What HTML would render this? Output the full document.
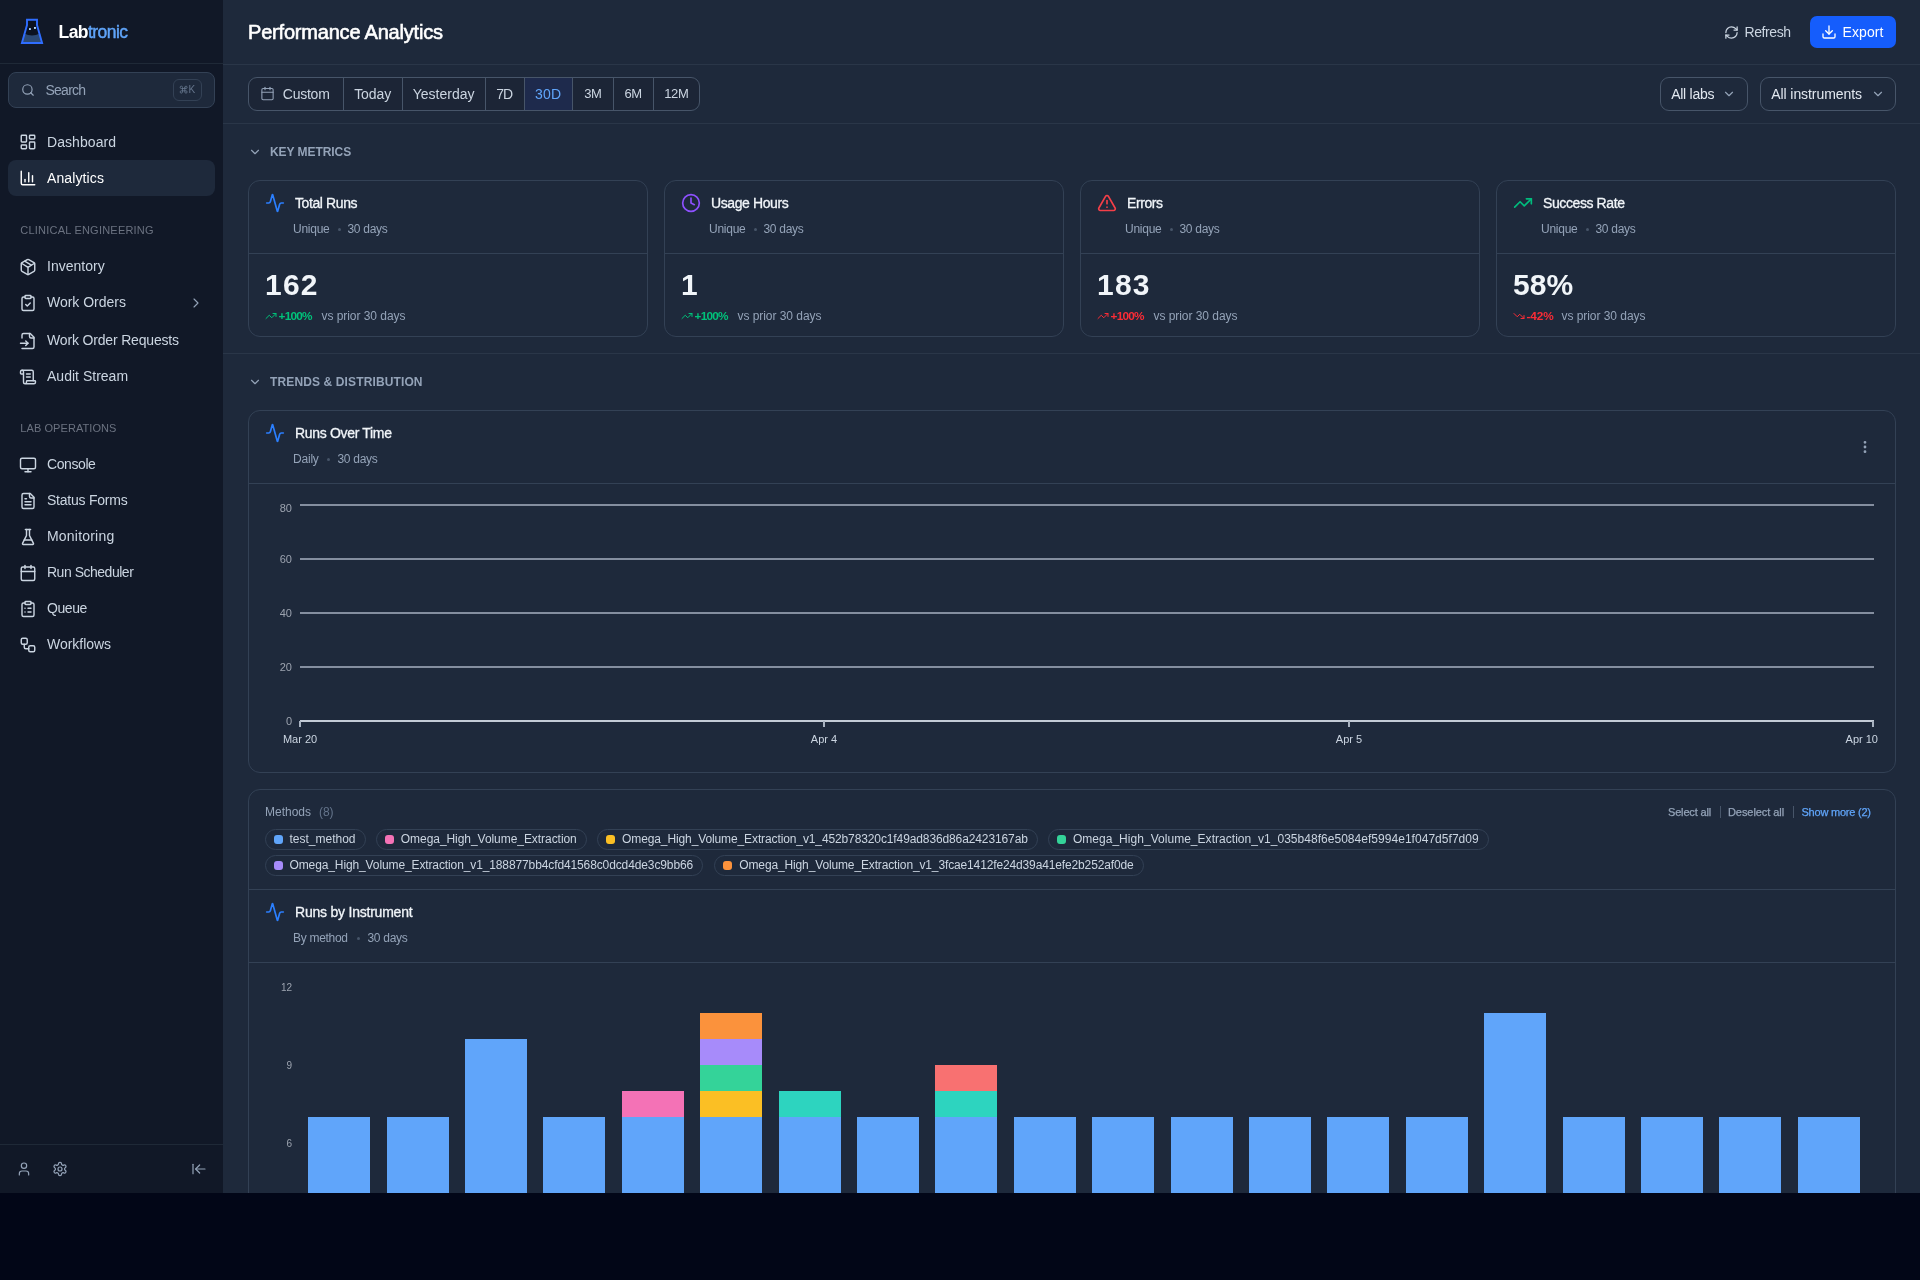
<!DOCTYPE html>
<html><head><meta charset="utf-8">
<style>
*{box-sizing:border-box;margin:0;padding:0}
html,body{width:1920px;height:1280px;overflow:hidden;background:#020617;font-family:"Liberation Sans",sans-serif;-webkit-font-smoothing:antialiased}
.abs{position:absolute}
svg{display:block}
#sb{position:absolute;left:0;top:0;width:223px;height:1193px;background:#111827;overflow:hidden}
#main{position:absolute;left:223px;top:0;width:1697px;height:1193px;background:#1e293b;overflow:hidden}
#mi{position:absolute;left:-223px;top:0;width:1920px;height:1280px;will-change:transform}
#sbi{position:absolute;left:0;top:0;width:223px;height:1193px;will-change:transform}
.t{position:absolute;white-space:nowrap;line-height:1}
.ic{position:absolute;fill:none;stroke:currentColor;stroke-width:2;stroke-linecap:round;stroke-linejoin:round}
</style></head><body>

<div id="sb"><div id="sbi">
<svg class="abs" style="left:14px;top:12px" width="40" height="40" viewBox="0 0 40 40">
<path d="M13 7.7 H23 V13 L28.1 31 H7.9 L13 13 Z" fill="#0b1220"/>
<path d="M10.1 21.5 Q18 25.5 25.9 21.5 L28.1 31 H7.9 Z" fill="#2c4a74"/>
<path d="M13 7.7 H23 V13 L28.1 31 H7.9 L13 13 Z" fill="none" stroke="#2f6dff" stroke-width="1.9" stroke-linejoin="miter"/>
<rect x="15" y="16.1" width="1.9" height="1.9" fill="#a5cdfd"/><rect x="20" y="15" width="1.9" height="1.9" fill="#b7dcff"/>
</svg>
<div class="t" style="left:58.5px;top:21.94px;height:20.12px;line-height:20.12px;font-size:17.5px;color:#ffffff;font-weight:bold;letter-spacing:-0.552734375px">Lab<span style="color:#60a5fa;font-weight:normal;-webkit-text-stroke:0.45px #60a5fa">tronic</span></div>
<div class="abs" style="left:0px;top:63px;width:223px;height:1px;background:#1f2937"></div>
<div class="abs" style="left:8px;top:72px;width:207px;height:36px;border:1px solid #334155;border-radius:8px;background:#1e293b"></div>
<svg class="ic" style="left:20.7px;top:83.2px;color:#94a3b8;stroke-width:2" width="14" height="14" viewBox="0 0 24 24"><circle cx="11" cy="11" r="8"/><path d="m21 21-4.3-4.3"/></svg>
<div class="t" style="left:45.5px;top:82.45px;height:16.10px;line-height:16.10px;font-size:14px;color:#94a3b8;font-weight:normal;letter-spacing:-0.7518749999999997px">Search</div>
<div class="abs" style="left:173px;top:79px;width:29px;height:22px;border:1px solid #334155;border-radius:6px"></div>
<svg class="ic" style="left:178.8px;top:85px;color:#64748b;stroke-width:2.2" width="9.3" height="9.3" viewBox="0 0 24 24"><path d="M15 6v12a3 3 0 1 0 3-3H6a3 3 0 1 0 3 3V6a3 3 0 1 0-3 3h12a3 3 0 1 0-3-3"/></svg>
<div class="t" style="left:188.6px;top:84.45px;height:11.50px;line-height:11.50px;font-size:10px;color:#64748b;font-weight:normal;letter-spacing:0px">K</div>
<div class="abs" style="left:8px;top:160px;width:207px;height:36px;background:#1e293b;border-radius:8px"></div>
<svg class="ic" style="left:19.4px;top:133.4px;color:#cbd5e1;stroke-width:1.9" width="18" height="18" viewBox="0 0 24 24"><rect width="7" height="9" x="3" y="3" rx="1"/><rect width="7" height="5" x="14" y="3" rx="1"/><rect width="7" height="9" x="14" y="12" rx="1"/><rect width="7" height="5" x="3" y="16" rx="1"/></svg>
<div class="t" style="left:47px;top:133.95px;height:16.10px;line-height:16.10px;font-size:14px;color:#cbd5e1;font-weight:normal;letter-spacing:0.07500000000000107px">Dashboard</div>
<svg class="ic" style="left:19.4px;top:169.4px;color:#ffffff;stroke-width:1.9" width="18" height="18" viewBox="0 0 24 24"><path d="M3 3v16a2 2 0 0 0 2 2h16"/><path d="M18 17V9"/><path d="M13 17V5"/><path d="M8 17v-3"/></svg>
<div class="t" style="left:47px;top:169.95px;height:16.10px;line-height:16.10px;font-size:14px;color:#ffffff;font-weight:normal;letter-spacing:0.10859375000000071px">Analytics</div>
<svg class="ic" style="left:19.4px;top:257.9px;color:#cbd5e1;stroke-width:1.9" width="18" height="18" viewBox="0 0 24 24"><path d="M11 21.73a2 2 0 0 0 2 0l7-4A2 2 0 0 0 21 16V8a2 2 0 0 0-1-1.73l-7-4a2 2 0 0 0-2 0l-7 4A2 2 0 0 0 3 8v8a2 2 0 0 0 1 1.73z"/><path d="M12 22V12"/><path d="m3.3 7 7.703 4.734a2 2 0 0 0 1.994 0L20.7 7"/><path d="m7.5 4.27 9 5.15"/></svg>
<div class="t" style="left:47px;top:258.45px;height:16.10px;line-height:16.10px;font-size:14px;color:#cbd5e1;font-weight:normal;letter-spacing:0.013281250000000355px">Inventory</div>
<svg class="ic" style="left:19.4px;top:293.9px;color:#cbd5e1;stroke-width:1.9" width="18" height="18" viewBox="0 0 24 24"><rect width="8" height="4" x="8" y="2" rx="1" ry="1"/><path d="M16 4h2a2 2 0 0 1 2 2v14a2 2 0 0 1-2 2H6a2 2 0 0 1-2-2V6a2 2 0 0 1 2-2h2"/><path d="m9 14 2 2 4-4"/></svg>
<div class="t" style="left:47px;top:294.45px;height:16.10px;line-height:16.10px;font-size:14px;color:#cbd5e1;font-weight:normal;letter-spacing:-0.014374999999999716px">Work Orders</div>
<svg class="ic" style="left:19.4px;top:331.9px;color:#cbd5e1;stroke-width:1.9" width="18" height="18" viewBox="0 0 24 24"><path d="M4 22h14a2 2 0 0 0 2-2V7l-5-5H6a2 2 0 0 0-2 2v4"/><path d="M14 2v4a2 2 0 0 0 2 2h4"/><path d="M2 15h10"/><path d="m9 18 3-3-3-3"/></svg>
<div class="t" style="left:47px;top:332.45px;height:16.10px;line-height:16.10px;font-size:14px;color:#cbd5e1;font-weight:normal;letter-spacing:-0.1680555555555543px">Work Order Requests</div>
<svg class="ic" style="left:19.4px;top:367.9px;color:#cbd5e1;stroke-width:1.9" width="18" height="18" viewBox="0 0 24 24"><path d="M15 12h-5"/><path d="M15 8h-5"/><path d="M19 17V5a2 2 0 0 0-2-2H4"/><path d="M8 21h12a2 2 0 0 0 2-2v-1a1 1 0 0 0-1-1H11a1 1 0 0 0-1 1v1a2 2 0 1 1-4 0V5a2 2 0 1 0-4 0v2a1 1 0 0 0 1 1h3"/></svg>
<div class="t" style="left:47px;top:368.45px;height:16.10px;line-height:16.10px;font-size:14px;color:#cbd5e1;font-weight:normal;letter-spacing:0.014772727272728048px">Audit Stream</div>
<svg class="ic" style="left:19.4px;top:455.9px;color:#cbd5e1;stroke-width:1.9" width="18" height="18" viewBox="0 0 24 24"><rect width="20" height="14" x="2" y="3" rx="2"/><line x1="8" x2="16" y1="21" y2="21"/><line x1="12" x2="12" y1="17" y2="21"/></svg>
<div class="t" style="left:47px;top:456.45px;height:16.10px;line-height:16.10px;font-size:14px;color:#cbd5e1;font-weight:normal;letter-spacing:-0.41249999999999903px">Console</div>
<svg class="ic" style="left:19.4px;top:491.9px;color:#cbd5e1;stroke-width:1.9" width="18" height="18" viewBox="0 0 24 24"><path d="M15 2H6a2 2 0 0 0-2 2v16a2 2 0 0 0 2 2h12a2 2 0 0 0 2-2V7Z"/><path d="M14 2v4a2 2 0 0 0 2 2h4"/><path d="M10 9H8"/><path d="M16 13H8"/><path d="M16 17H8"/></svg>
<div class="t" style="left:47px;top:492.45px;height:16.10px;line-height:16.10px;font-size:14px;color:#cbd5e1;font-weight:normal;letter-spacing:-0.23181818181818156px">Status Forms</div>
<svg class="ic" style="left:19.4px;top:527.9px;color:#cbd5e1;stroke-width:1.9" width="18" height="18" viewBox="0 0 24 24"><path d="M10 2v7.527a2 2 0 0 1-.211.896L4.72 20.55a1 1 0 0 0 .9 1.45h12.76a1 1 0 0 0 .9-1.45l-5.069-10.127A2 2 0 0 1 14 9.527V2"/><path d="M8.5 2h7"/><path d="M7 16h10"/></svg>
<div class="t" style="left:47px;top:528.45px;height:16.10px;line-height:16.10px;font-size:14px;color:#cbd5e1;font-weight:normal;letter-spacing:0.20277777777777808px">Monitoring</div>
<svg class="ic" style="left:19.4px;top:563.9px;color:#cbd5e1;stroke-width:1.9" width="18" height="18" viewBox="0 0 24 24"><path d="M8 2v4"/><path d="M16 2v4"/><rect width="18" height="18" x="3" y="4" rx="2"/><path d="M3 10h18"/></svg>
<div class="t" style="left:47px;top:564.45px;height:16.10px;line-height:16.10px;font-size:14px;color:#cbd5e1;font-weight:normal;letter-spacing:-0.4854166666666669px">Run Scheduler</div>
<svg class="ic" style="left:19.4px;top:599.9px;color:#cbd5e1;stroke-width:1.9" width="18" height="18" viewBox="0 0 24 24"><rect width="8" height="4" x="8" y="2" rx="1" ry="1"/><path d="M16 4h2a2 2 0 0 1 2 2v14a2 2 0 0 1-2 2H6a2 2 0 0 1-2-2V6a2 2 0 0 1 2-2h2"/><path d="M12 11h4"/><path d="M12 16h4"/><path d="M8 11h.01"/><path d="M8 16h.01"/></svg>
<div class="t" style="left:47px;top:600.45px;height:16.10px;line-height:16.10px;font-size:14px;color:#cbd5e1;font-weight:normal;letter-spacing:-0.4117187499999986px">Queue</div>
<svg class="ic" style="left:19.4px;top:635.9px;color:#cbd5e1;stroke-width:1.9" width="18" height="18" viewBox="0 0 24 24"><rect width="8" height="8" x="3" y="3" rx="2"/><path d="M7 11v4a2 2 0 0 0 2 2h4"/><rect width="8" height="8" x="13" y="13" rx="2"/></svg>
<div class="t" style="left:47px;top:636.45px;height:16.10px;line-height:16.10px;font-size:14px;color:#cbd5e1;font-weight:normal;letter-spacing:-0.026562499999998934px">Workflows</div>
<svg class="ic" style="left:188px;top:294.5px;color:#94a3b8;stroke-width:1.7" width="16" height="16" viewBox="0 0 24 24"><path d="m9 18 6-6-6-6"/></svg>
<div class="t" style="left:20.3px;top:223.68px;height:12.65px;line-height:12.65px;font-size:11px;color:#6b7280;font-weight:normal;letter-spacing:0.21644736842105322px">CLINICAL ENGINEERING</div>
<div class="t" style="left:20.3px;top:421.68px;height:12.65px;line-height:12.65px;font-size:11px;color:#6b7280;font-weight:normal;letter-spacing:0.07259615384615341px">LAB OPERATIONS</div>
<div class="abs" style="left:0px;top:1144px;width:223px;height:1px;background:#1f2937"></div>
<svg class="ic" style="left:16.1px;top:1161px;color:#94a3b8;stroke-width:1.8" width="16" height="16" viewBox="0 0 24 24"><path d="M19 21v-2a4 4 0 0 0-4-4H9a4 4 0 0 0-4 4v2"/><circle cx="12" cy="7" r="4"/></svg>
<svg class="ic" style="left:52px;top:1161px;color:#94a3b8;stroke-width:1.8" width="16" height="16" viewBox="0 0 24 24"><path d="M12.22 2h-.44a2 2 0 0 0-2 2v.18a2 2 0 0 1-1 1.73l-.43.25a2 2 0 0 1-2 0l-.15-.08a2 2 0 0 0-2.73.73l-.22.38a2 2 0 0 0 .73 2.730l.15.1a2 2 0 0 1 1 1.72v.51a2 2 0 0 1-1 1.74l-.15.09a2 2 0 0 0-.73 2.73l.22.38a2 2 0 0 0 2.73.73l.15-.08a2 2 0 0 1 2 0l.43.25a2 2 0 0 1 1 1.73V20a2 2 0 0 0 2 2h.44a2 2 0 0 0 2-2v-.18a2 2 0 0 1 1-1.73l.43-.25a2 2 0 0 1 2 0l.15.08a2 2 0 0 0 2.73-.73l.22-.39a2 2 0 0 0-.73-2.73l-.15-.08a2 2 0 0 1-1-1.74v-.5a2 2 0 0 1 1-1.74l.15-.09a2 2 0 0 0 .73-2.73l-.22-.38a2 2 0 0 0-2.73-.73l-.15.08a2 2 0 0 1-2 0l-.43-.25a2 2 0 0 1-1-1.73V4a2 2 0 0 0-2-2z"/><circle cx="12" cy="12" r="3"/></svg>
<svg class="ic" style="left:190.75px;top:1161px;color:#94a3b8;stroke-width:1.8" width="16" height="16" viewBox="0 0 24 24"><path d="M3 19V5"/><path d="m13 6-6 6 6 6"/><path d="M7 12h14"/></svg>
</div></div>
<div id="main"><div id="mi">
<div class="t" style="left:248px;top:20.50px;height:23.00px;line-height:23.00px;font-size:20px;color:#ffffff;font-weight:normal;letter-spacing:-0.19921875px;-webkit-text-stroke:0.6px #ffffff">Performance Analytics</div>
<div class="abs" style="left:223px;top:64px;width:1697px;height:1px;background:#2a3648"></div>
<svg class="ic" style="left:1723.5px;top:24.5px;color:#cbd5e1;stroke-width:2" width="15" height="15" viewBox="0 0 24 24"><path d="M3 12a9 9 0 0 1 9-9 9.75 9.75 0 0 1 6.74 2.74L21 8"/><path d="M21 3v5h-5"/><path d="M21 12a9 9 0 0 1-9 9 9.75 9.75 0 0 1-6.74-2.74L3 16"/><path d="M8 16H3v5"/></svg>
<div class="t" style="left:1744.5px;top:23.95px;height:16.10px;line-height:16.10px;font-size:14px;color:#cbd5e1;font-weight:normal;letter-spacing:-0.4052083333333331px">Refresh</div>
<div class="abs" style="left:1810px;top:16px;width:86px;height:32px;background:#155dfc;border-radius:7px"></div>
<svg class="ic" style="left:1821px;top:24px;color:#ffffff;stroke-width:2" width="16" height="16" viewBox="0 0 24 24"><path d="M21 15v4a2 2 0 0 1-2 2H5a2 2 0 0 1-2-2v-4"/><polyline points="7 10 12 15 17 10"/><line x1="12" x2="12" y1="15" y2="3"/></svg>
<div class="t" style="left:1842.5px;top:23.95px;height:16.10px;line-height:16.10px;font-size:14px;color:#ffffff;font-weight:normal;letter-spacing:0.10625px">Export</div>
<div class="abs" style="left:223px;top:123px;width:1697px;height:1px;background:#2a3648"></div>
<div class="abs" style="left:248px;top:77px;width:452px;height:34px;border:1px solid #475569;border-radius:9px;background:#1c2536;overflow:hidden"></div>
<svg class="ic" style="left:260px;top:86px;color:#94a3b8;stroke-width:1.7" width="15" height="15" viewBox="0 0 24 24"><path d="M8 2v4"/><path d="M16 2v4"/><rect width="18" height="18" x="3" y="4" rx="2"/><path d="M3 10h18"/></svg>
<div class="t" style="left:282.8px;top:85.95px;height:16.10px;line-height:16.10px;font-size:14px;color:#cbd5e1;font-weight:normal;letter-spacing:-0.246875px">Custom</div>
<div class="abs" style="left:343px;top:78px;width:1px;height:32px;background:#475569"></div>
<div class="t" style="left:354.2px;top:85.95px;height:16.10px;line-height:16.10px;font-size:14px;color:#cbd5e1;font-weight:normal;letter-spacing:-0.08984375px">Today</div>
<div class="abs" style="left:402px;top:78px;width:1px;height:32px;background:#475569"></div>
<div class="t" style="left:412.8px;top:85.95px;height:16.10px;line-height:16.10px;font-size:14px;color:#cbd5e1;font-weight:normal;letter-spacing:-0.006250000000001421px">Yesterday</div>
<div class="abs" style="left:485px;top:78px;width:1px;height:32px;background:#475569"></div>
<div class="t" style="left:496.2px;top:85.95px;height:16.10px;line-height:16.10px;font-size:14px;color:#cbd5e1;font-weight:normal;letter-spacing:-0.9062499999999432px">7D</div>
<div class="abs" style="left:525px;top:78px;width:47px;height:32px;background:#1e2a4c"></div>
<div class="abs" style="left:524px;top:78px;width:1px;height:32px;background:#475569"></div>
<div class="t" style="left:535.0px;top:85.95px;height:16.10px;line-height:16.10px;font-size:14px;color:#60a5fa;font-weight:normal;letter-spacing:0.15625px">30D</div>
<div class="abs" style="left:572px;top:78px;width:1px;height:32px;background:#475569"></div>
<div class="t" style="left:392.79999999999995px;width:400px;text-align:center;top:86.53px;height:14.95px;line-height:14.95px;font-size:13px;color:#cbd5e1;font-weight:normal;letter-spacing:-0.4px">3M</div>
<div class="abs" style="left:613px;top:78px;width:1px;height:32px;background:#475569"></div>
<div class="t" style="left:433.07500000000005px;width:400px;text-align:center;top:86.53px;height:14.95px;line-height:14.95px;font-size:13px;color:#cbd5e1;font-weight:normal;letter-spacing:-0.4px">6M</div>
<div class="abs" style="left:653px;top:78px;width:1px;height:32px;background:#475569"></div>
<div class="t" style="left:476.29999999999995px;width:400px;text-align:center;top:86.53px;height:14.95px;line-height:14.95px;font-size:13px;color:#cbd5e1;font-weight:normal;letter-spacing:-0.4px">12M</div>
<div class="abs" style="left:1660px;top:77px;width:88px;height:34px;border:1px solid #475569;border-radius:9px"></div>
<div class="t" style="left:1671.2px;top:85.95px;height:16.10px;line-height:16.10px;font-size:14px;color:#e2e8f0;font-weight:normal;letter-spacing:-0.26294642857142897px">All labs</div>
<svg class="ic" style="left:1722px;top:87px;color:#94a3b8;stroke-width:2" width="14" height="14" viewBox="0 0 24 24"><path d="m6 9 6 6 6-6"/></svg>
<div class="abs" style="left:1760px;top:77px;width:136px;height:34px;border:1px solid #475569;border-radius:9px"></div>
<div class="t" style="left:1771.2px;top:85.95px;height:16.10px;line-height:16.10px;font-size:14px;color:#e2e8f0;font-weight:normal;letter-spacing:-0.07232142857142877px">All instruments</div>
<svg class="ic" style="left:1871px;top:87px;color:#94a3b8;stroke-width:2" width="14" height="14" viewBox="0 0 24 24"><path d="m6 9 6 6 6-6"/></svg>
<svg class="ic" style="left:248px;top:145px;color:#94a3b8;stroke-width:2" width="14" height="14" viewBox="0 0 24 24"><path d="m6 9 6 6 6-6"/></svg>
<div class="t" style="left:270px;top:145.60px;height:13.80px;line-height:13.80px;font-size:12px;color:#94a3b8;font-weight:bold;letter-spacing:-0.05968749999999971px">KEY METRICS</div>
<div class="abs" style="left:248px;top:180px;width:400px;height:157px;border:1px solid #334155;border-radius:12px"></div>
<div class="abs" style="left:248px;top:253px;width:400px;height:1px;background:#334155"></div>
<svg class="ic" style="left:265px;top:193px;color:#2b7fff;stroke-width:2" width="20" height="20" viewBox="0 0 24 24"><path d="M22 12h-2.48a2 2 0 0 0-1.93 1.46l-2.35 8.36a.25.25 0 0 1-.48 0L9.24 2.18a.25.25 0 0 0-.48 0l-2.35 8.36A2 2 0 0 1 4.49 12H2"/></svg>
<div class="t" style="left:295px;top:195.45px;height:16.10px;line-height:16.10px;font-size:14px;color:#f1f5f9;font-weight:normal;letter-spacing:-0.4px;-webkit-text-stroke:0.3px #f1f5f9">Total Runs</div>
<div class="t" style="left:293px;top:222.60px;height:13.80px;line-height:13.80px;font-size:12px;color:#94a3b8;font-weight:normal;letter-spacing:-0.25px">Unique</div>
<div class="abs" style="left:337.5px;top:227.5px;width:3px;height:3px;background:#475569;border-radius:50%"></div>
<div class="t" style="left:347.5px;top:222.60px;height:13.80px;line-height:13.80px;font-size:12px;color:#94a3b8;font-weight:normal;letter-spacing:-0.3px">30 days</div>
<div class="t" style="left:265px;top:267.75px;height:34.50px;line-height:34.50px;font-size:30px;color:#f1f5f9;font-weight:bold;letter-spacing:1.2px">162</div>
<svg class="ic" style="left:265px;top:309.5px;color:#00c27a;stroke-width:2" width="12" height="12" viewBox="0 0 24 24"><polyline points="22 7 13.5 15.5 8.5 10.5 2 17"/><polyline points="16 7 22 7 22 13"/></svg>
<div class="t" style="left:278.5px;top:309.51px;height:13.57px;line-height:13.57px;font-size:11.8px;color:#00c27a;font-weight:bold;letter-spacing:-0.75px">+100%</div>
<div class="t" style="left:321.5px;top:309.80px;height:13.80px;line-height:13.80px;font-size:12px;color:#94a3b8;font-weight:normal;letter-spacing:-0.05px">vs prior 30 days</div>
<div class="abs" style="left:664px;top:180px;width:400px;height:157px;border:1px solid #334155;border-radius:12px"></div>
<div class="abs" style="left:664px;top:253px;width:400px;height:1px;background:#334155"></div>
<svg class="ic" style="left:681px;top:193px;color:#8e51ff;stroke-width:2" width="20" height="20" viewBox="0 0 24 24"><circle cx="12" cy="12" r="10"/><polyline points="12 6 12 12 16 14"/></svg>
<div class="t" style="left:711px;top:195.45px;height:16.10px;line-height:16.10px;font-size:14px;color:#f1f5f9;font-weight:normal;letter-spacing:-0.4px;-webkit-text-stroke:0.3px #f1f5f9">Usage Hours</div>
<div class="t" style="left:709px;top:222.60px;height:13.80px;line-height:13.80px;font-size:12px;color:#94a3b8;font-weight:normal;letter-spacing:-0.25px">Unique</div>
<div class="abs" style="left:753.5px;top:227.5px;width:3px;height:3px;background:#475569;border-radius:50%"></div>
<div class="t" style="left:763.5px;top:222.60px;height:13.80px;line-height:13.80px;font-size:12px;color:#94a3b8;font-weight:normal;letter-spacing:-0.3px">30 days</div>
<div class="t" style="left:681px;top:267.75px;height:34.50px;line-height:34.50px;font-size:30px;color:#f1f5f9;font-weight:bold;letter-spacing:1.2px">1</div>
<svg class="ic" style="left:681px;top:309.5px;color:#00c27a;stroke-width:2" width="12" height="12" viewBox="0 0 24 24"><polyline points="22 7 13.5 15.5 8.5 10.5 2 17"/><polyline points="16 7 22 7 22 13"/></svg>
<div class="t" style="left:694.5px;top:309.51px;height:13.57px;line-height:13.57px;font-size:11.8px;color:#00c27a;font-weight:bold;letter-spacing:-0.75px">+100%</div>
<div class="t" style="left:737.5px;top:309.80px;height:13.80px;line-height:13.80px;font-size:12px;color:#94a3b8;font-weight:normal;letter-spacing:-0.05px">vs prior 30 days</div>
<div class="abs" style="left:1080px;top:180px;width:400px;height:157px;border:1px solid #334155;border-radius:12px"></div>
<div class="abs" style="left:1080px;top:253px;width:400px;height:1px;background:#334155"></div>
<svg class="ic" style="left:1097px;top:193px;color:#f43f48;stroke-width:2" width="20" height="20" viewBox="0 0 24 24"><path d="m21.73 18-8-14a2 2 0 0 0-3.48 0l-8 14A2 2 0 0 0 4 21h16a2 2 0 0 0 1.73-3"/><path d="M12 9v4"/><path d="M12 17h.01"/></svg>
<div class="t" style="left:1127px;top:195.45px;height:16.10px;line-height:16.10px;font-size:14px;color:#f1f5f9;font-weight:normal;letter-spacing:-0.4px;-webkit-text-stroke:0.3px #f1f5f9">Errors</div>
<div class="t" style="left:1125px;top:222.60px;height:13.80px;line-height:13.80px;font-size:12px;color:#94a3b8;font-weight:normal;letter-spacing:-0.25px">Unique</div>
<div class="abs" style="left:1169.5px;top:227.5px;width:3px;height:3px;background:#475569;border-radius:50%"></div>
<div class="t" style="left:1179.5px;top:222.60px;height:13.80px;line-height:13.80px;font-size:12px;color:#94a3b8;font-weight:normal;letter-spacing:-0.3px">30 days</div>
<div class="t" style="left:1097px;top:267.75px;height:34.50px;line-height:34.50px;font-size:30px;color:#f1f5f9;font-weight:bold;letter-spacing:1.2px">183</div>
<svg class="ic" style="left:1097px;top:309.5px;color:#fb2c36;stroke-width:2" width="12" height="12" viewBox="0 0 24 24"><polyline points="22 7 13.5 15.5 8.5 10.5 2 17"/><polyline points="16 7 22 7 22 13"/></svg>
<div class="t" style="left:1110.5px;top:309.51px;height:13.57px;line-height:13.57px;font-size:11.8px;color:#fb2c36;font-weight:bold;letter-spacing:-0.75px">+100%</div>
<div class="t" style="left:1153.5px;top:309.80px;height:13.80px;line-height:13.80px;font-size:12px;color:#94a3b8;font-weight:normal;letter-spacing:-0.05px">vs prior 30 days</div>
<div class="abs" style="left:1496px;top:180px;width:400px;height:157px;border:1px solid #334155;border-radius:12px"></div>
<div class="abs" style="left:1496px;top:253px;width:400px;height:1px;background:#334155"></div>
<svg class="ic" style="left:1513px;top:193px;color:#00bc7d;stroke-width:2" width="20" height="20" viewBox="0 0 24 24"><polyline points="22 7 13.5 15.5 8.5 10.5 2 17"/><polyline points="16 7 22 7 22 13"/></svg>
<div class="t" style="left:1543px;top:195.45px;height:16.10px;line-height:16.10px;font-size:14px;color:#f1f5f9;font-weight:normal;letter-spacing:-0.4px;-webkit-text-stroke:0.3px #f1f5f9">Success Rate</div>
<div class="t" style="left:1541px;top:222.60px;height:13.80px;line-height:13.80px;font-size:12px;color:#94a3b8;font-weight:normal;letter-spacing:-0.25px">Unique</div>
<div class="abs" style="left:1585.5px;top:227.5px;width:3px;height:3px;background:#475569;border-radius:50%"></div>
<div class="t" style="left:1595.5px;top:222.60px;height:13.80px;line-height:13.80px;font-size:12px;color:#94a3b8;font-weight:normal;letter-spacing:-0.3px">30 days</div>
<div class="t" style="left:1513px;top:267.75px;height:34.50px;line-height:34.50px;font-size:30px;color:#f1f5f9;font-weight:bold;letter-spacing:0.1px">58%</div>
<svg class="ic" style="left:1513px;top:309.5px;color:#fb2c36;stroke-width:2" width="12" height="12" viewBox="0 0 24 24"><polyline points="22 17 13.5 8.5 8.5 13.5 2 7"/><polyline points="16 17 22 17 22 11"/></svg>
<div class="t" style="left:1526.5px;top:309.51px;height:13.57px;line-height:13.57px;font-size:11.8px;color:#fb2c36;font-weight:bold;letter-spacing:-0.1px">-42%</div>
<div class="t" style="left:1561.5px;top:309.80px;height:13.80px;line-height:13.80px;font-size:12px;color:#94a3b8;font-weight:normal;letter-spacing:-0.05px">vs prior 30 days</div>
<div class="abs" style="left:223px;top:353px;width:1697px;height:1px;background:#2a3648"></div>
<svg class="ic" style="left:248px;top:375px;color:#94a3b8;stroke-width:2" width="14" height="14" viewBox="0 0 24 24"><path d="m6 9 6 6 6-6"/></svg>
<div class="t" style="left:270px;top:375.60px;height:13.80px;line-height:13.80px;font-size:12px;color:#94a3b8;font-weight:bold;letter-spacing:0.125px">TRENDS &amp; DISTRIBUTION</div>
<div class="abs" style="left:248px;top:410px;width:1648px;height:363px;border:1px solid #334155;border-radius:12px"></div>
<div class="abs" style="left:248px;top:483px;width:1648px;height:1px;background:#334155"></div>
<svg class="ic" style="left:265px;top:423px;color:#2b7fff;stroke-width:2" width="20" height="20" viewBox="0 0 24 24"><path d="M22 12h-2.48a2 2 0 0 0-1.93 1.46l-2.35 8.36a.25.25 0 0 1-.48 0L9.24 2.18a.25.25 0 0 0-.48 0l-2.35 8.36A2 2 0 0 1 4.49 12H2"/></svg>
<div class="t" style="left:295px;top:425.45px;height:16.10px;line-height:16.10px;font-size:14px;color:#f1f5f9;font-weight:normal;letter-spacing:-0.31850961538461536px;-webkit-text-stroke:0.3px #f1f5f9">Runs Over Time</div>
<div class="t" style="left:293px;top:452.60px;height:13.80px;line-height:13.80px;font-size:12px;color:#94a3b8;font-weight:normal;letter-spacing:-0.2px">Daily</div>
<div class="abs" style="left:326.5px;top:457.5px;width:3px;height:3px;background:#475569;border-radius:50%"></div>
<div class="t" style="left:337.5px;top:452.60px;height:13.80px;line-height:13.80px;font-size:12px;color:#94a3b8;font-weight:normal;letter-spacing:-0.3px">30 days</div>
<svg class="ic" style="left:1857px;top:439px;color:#94a3b8;stroke-width:2.2" width="16" height="16" viewBox="0 0 24 24"><circle cx="12" cy="12" r="1"/><circle cx="12" cy="5" r="1"/><circle cx="12" cy="19" r="1"/></svg>
<div class="abs" style="left:300px;top:504px;width:1574px;height:2px;background:#848e9f"></div>
<div class="t" style="right:1628px;top:501.68px;height:12.65px;line-height:12.65px;font-size:11px;color:#9ca3af;font-weight:normal;letter-spacing:0px">80</div>
<div class="abs" style="left:300px;top:558px;width:1574px;height:2px;background:#848e9f"></div>
<div class="t" style="right:1628px;top:552.67px;height:12.65px;line-height:12.65px;font-size:11px;color:#9ca3af;font-weight:normal;letter-spacing:0px">60</div>
<div class="abs" style="left:300px;top:612px;width:1574px;height:2px;background:#848e9f"></div>
<div class="t" style="right:1628px;top:606.67px;height:12.65px;line-height:12.65px;font-size:11px;color:#9ca3af;font-weight:normal;letter-spacing:0px">40</div>
<div class="abs" style="left:300px;top:666px;width:1574px;height:2px;background:#848e9f"></div>
<div class="t" style="right:1628px;top:660.67px;height:12.65px;line-height:12.65px;font-size:11px;color:#9ca3af;font-weight:normal;letter-spacing:0px">20</div>
<div class="abs" style="left:300px;top:720px;width:1574px;height:2px;background:#c3cbd6"></div>
<div class="t" style="right:1628px;top:714.67px;height:12.65px;line-height:12.65px;font-size:11px;color:#9ca3af;font-weight:normal;letter-spacing:0px">0</div>
<div class="abs" style="left:299px;top:721px;width:2px;height:6px;background:#a8b2c0"></div>
<div class="t" style="left:100px;width:400px;text-align:center;top:732.67px;height:12.65px;line-height:12.65px;font-size:11px;color:#cbd5e1;font-weight:normal;letter-spacing:0px">Mar 20</div>
<div class="abs" style="left:823px;top:721px;width:2px;height:6px;background:#a8b2c0"></div>
<div class="t" style="left:624px;width:400px;text-align:center;top:732.67px;height:12.65px;line-height:12.65px;font-size:11px;color:#cbd5e1;font-weight:normal;letter-spacing:0px">Apr 4</div>
<div class="abs" style="left:1348px;top:721px;width:2px;height:6px;background:#a8b2c0"></div>
<div class="t" style="left:1149px;width:400px;text-align:center;top:732.67px;height:12.65px;line-height:12.65px;font-size:11px;color:#cbd5e1;font-weight:normal;letter-spacing:0px">Apr 5</div>
<div class="abs" style="left:1872px;top:721px;width:2px;height:6px;background:#a8b2c0"></div>
<div class="t" style="right:42px;top:732.67px;height:12.65px;line-height:12.65px;font-size:11px;color:#cbd5e1;font-weight:normal;letter-spacing:0px">Apr 10</div>
<div class="abs" style="left:248px;top:789px;width:1648px;height:600px;border:1px solid #334155;border-radius:12px"></div>
<div class="t" style="left:265px;top:805.60px;height:13.80px;line-height:13.80px;font-size:12px;color:#94a3b8;font-weight:normal;letter-spacing:-0.005208333333333333px">Methods</div>
<div class="t" style="left:319px;top:805.60px;height:13.80px;line-height:13.80px;font-size:12px;color:#64748b;font-weight:normal;letter-spacing:-0.03593750000000018px">(8)</div>
<div class="t" style="left:1668px;top:805.67px;height:12.65px;line-height:12.65px;font-size:11px;color:#94a3b8;font-weight:normal;letter-spacing:-0.1711805555555554px;-webkit-text-stroke:0.25px #94a3b8">Select all</div>
<div class="abs" style="left:1720px;top:806px;width:1px;height:12px;background:#475569"></div>
<div class="t" style="left:1728px;top:805.67px;height:12.65px;line-height:12.65px;font-size:11px;color:#94a3b8;font-weight:normal;letter-spacing:-0.06903409090909078px;-webkit-text-stroke:0.25px #94a3b8">Deselect all</div>
<div class="abs" style="left:1793px;top:806px;width:1px;height:12px;background:#475569"></div>
<div class="t" style="left:1801.5px;top:805.67px;height:12.65px;line-height:12.65px;font-size:11px;color:#60a5fa;font-weight:normal;letter-spacing:-0.22005208333333334px;-webkit-text-stroke:0.25px #60a5fa">Show more (2)</div>
<div class="abs" style="left:264.5px;top:828.5px;width:101px;height:21px;border:1px solid #334155;border-radius:11px"></div>
<div class="abs" style="left:273.5px;top:834.5px;width:9px;height:9px;background:#60a5fa;border-radius:3px"></div>
<div class="t" style="left:289.5px;top:832.80px;height:13.80px;line-height:13.80px;font-size:12px;color:#cbd5e1;font-weight:normal;letter-spacing:-0.0046875px">test_method</div>
<div class="abs" style="left:375.8px;top:828.5px;width:211px;height:21px;border:1px solid #334155;border-radius:11px"></div>
<div class="abs" style="left:384.8px;top:834.5px;width:9px;height:9px;background:#f472b6;border-radius:3px"></div>
<div class="t" style="left:400.8px;top:832.80px;height:13.80px;line-height:13.80px;font-size:12px;color:#cbd5e1;font-weight:normal;letter-spacing:-0.05324074074074074px">Omega_High_Volume_Extraction</div>
<div class="abs" style="left:597.1px;top:828.5px;width:440.8px;height:21px;border:1px solid #334155;border-radius:11px"></div>
<div class="abs" style="left:606.1px;top:834.5px;width:9px;height:9px;background:#fbbf24;border-radius:3px"></div>
<div class="t" style="left:622.1px;top:832.80px;height:13.80px;line-height:13.80px;font-size:12px;color:#cbd5e1;font-weight:normal;letter-spacing:-0.11453373015872997px">Omega_High_Volume_Extraction_v1_452b78320c1f49ad836d86a2423167ab</div>
<div class="abs" style="left:1047.9px;top:828.5px;width:440.8px;height:21px;border:1px solid #334155;border-radius:11px"></div>
<div class="abs" style="left:1056.9px;top:834.5px;width:9px;height:9px;background:#34d399;border-radius:3px"></div>
<div class="t" style="left:1072.9px;top:832.80px;height:13.80px;line-height:13.80px;font-size:12px;color:#cbd5e1;font-weight:normal;letter-spacing:0.03377976190476208px">Omega_High_Volume_Extraction_v1_035b48f6e5084ef5994e1f047d5f7d09</div>
<div class="abs" style="left:264.5px;top:854.5px;width:438.7px;height:21px;border:1px solid #334155;border-radius:11px"></div>
<div class="abs" style="left:273.5px;top:860.5px;width:9px;height:9px;background:#a78bfa;border-radius:3px"></div>
<div class="t" style="left:289.5px;top:858.80px;height:13.80px;line-height:13.80px;font-size:12px;color:#cbd5e1;font-weight:normal;letter-spacing:-0.11562500000000019px">Omega_High_Volume_Extraction_v1_188877bb4cfd41568c0dcd4de3c9bb66</div>
<div class="abs" style="left:714.3px;top:854.5px;width:429.4px;height:21px;border:1px solid #334155;border-radius:11px"></div>
<div class="abs" style="left:723.3px;top:860.5px;width:9px;height:9px;background:#fb923c;border-radius:3px"></div>
<div class="t" style="left:739.3px;top:858.80px;height:13.80px;line-height:13.80px;font-size:12px;color:#cbd5e1;font-weight:normal;letter-spacing:-0.13625992063492098px">Omega_High_Volume_Extraction_v1_3fcae1412fe24d39a41efe2b252af0de</div>
<div class="abs" style="left:248px;top:889px;width:1648px;height:1px;background:#334155"></div>
<svg class="ic" style="left:265px;top:902px;color:#2b7fff;stroke-width:2" width="20" height="20" viewBox="0 0 24 24"><path d="M22 12h-2.48a2 2 0 0 0-1.93 1.46l-2.35 8.36a.25.25 0 0 1-.48 0L9.24 2.18a.25.25 0 0 0-.48 0l-2.35 8.36A2 2 0 0 1 4.49 12H2"/></svg>
<div class="t" style="left:295px;top:904.45px;height:16.10px;line-height:16.10px;font-size:14px;color:#f1f5f9;font-weight:normal;letter-spacing:-0.22297794117647093px;-webkit-text-stroke:0.3px #f1f5f9">Runs by Instrument</div>
<div class="t" style="left:293px;top:931.60px;height:13.80px;line-height:13.80px;font-size:12px;color:#94a3b8;font-weight:normal;letter-spacing:-0.3px">By method</div>
<div class="abs" style="left:356.5px;top:936.5px;width:3px;height:3px;background:#475569;border-radius:50%"></div>
<div class="t" style="left:367.5px;top:931.60px;height:13.80px;line-height:13.80px;font-size:12px;color:#94a3b8;font-weight:normal;letter-spacing:-0.3px">30 days</div>
<div class="abs" style="left:248px;top:962px;width:1648px;height:1px;background:#334155"></div>
<div class="t" style="right:1628px;top:981.75px;height:11.50px;line-height:11.50px;font-size:10px;color:#9ca3af;font-weight:normal;letter-spacing:0px">12</div>
<div class="t" style="right:1628px;top:1059.75px;height:11.50px;line-height:11.50px;font-size:10px;color:#9ca3af;font-weight:normal;letter-spacing:0px">9</div>
<div class="t" style="right:1628px;top:1137.75px;height:11.50px;line-height:11.50px;font-size:10px;color:#9ca3af;font-weight:normal;letter-spacing:0px">6</div>
<div class="abs" style="left:308.00px;top:1117px;width:62px;height:182px;background:#60a5fa"></div>
<div class="abs" style="left:387.00px;top:1117px;width:62px;height:182px;background:#60a5fa"></div>
<div class="abs" style="left:465.00px;top:1039px;width:62px;height:260px;background:#60a5fa"></div>
<div class="abs" style="left:543.00px;top:1117px;width:62px;height:182px;background:#60a5fa"></div>
<div class="abs" style="left:622.00px;top:1117px;width:62px;height:182px;background:#60a5fa"></div>
<div class="abs" style="left:622.00px;top:1091px;width:62px;height:26px;background:#f472b6"></div>
<div class="abs" style="left:700.00px;top:1117px;width:62px;height:182px;background:#60a5fa"></div>
<div class="abs" style="left:700.00px;top:1091px;width:62px;height:26px;background:#fbbf24"></div>
<div class="abs" style="left:700.00px;top:1065px;width:62px;height:26px;background:#34d399"></div>
<div class="abs" style="left:700.00px;top:1039px;width:62px;height:26px;background:#a78bfa"></div>
<div class="abs" style="left:700.00px;top:1013px;width:62px;height:26px;background:#fb923c"></div>
<div class="abs" style="left:779.00px;top:1117px;width:62px;height:182px;background:#60a5fa"></div>
<div class="abs" style="left:779.00px;top:1091px;width:62px;height:26px;background:#2dd4bf"></div>
<div class="abs" style="left:857.00px;top:1117px;width:62px;height:182px;background:#60a5fa"></div>
<div class="abs" style="left:935.00px;top:1117px;width:62px;height:182px;background:#60a5fa"></div>
<div class="abs" style="left:935.00px;top:1091px;width:62px;height:26px;background:#2dd4bf"></div>
<div class="abs" style="left:935.00px;top:1065px;width:62px;height:26px;background:#f87171"></div>
<div class="abs" style="left:1014.00px;top:1117px;width:62px;height:182px;background:#60a5fa"></div>
<div class="abs" style="left:1092.00px;top:1117px;width:62px;height:182px;background:#60a5fa"></div>
<div class="abs" style="left:1171.00px;top:1117px;width:62px;height:182px;background:#60a5fa"></div>
<div class="abs" style="left:1249.00px;top:1117px;width:62px;height:182px;background:#60a5fa"></div>
<div class="abs" style="left:1327.00px;top:1117px;width:62px;height:182px;background:#60a5fa"></div>
<div class="abs" style="left:1406.00px;top:1117px;width:62px;height:182px;background:#60a5fa"></div>
<div class="abs" style="left:1484.00px;top:1013px;width:62px;height:286px;background:#60a5fa"></div>
<div class="abs" style="left:1563.00px;top:1117px;width:62px;height:182px;background:#60a5fa"></div>
<div class="abs" style="left:1641.00px;top:1117px;width:62px;height:182px;background:#60a5fa"></div>
<div class="abs" style="left:1719.00px;top:1117px;width:62px;height:182px;background:#60a5fa"></div>
<div class="abs" style="left:1798.00px;top:1117px;width:62px;height:182px;background:#60a5fa"></div>
</div></div>
</body></html>
